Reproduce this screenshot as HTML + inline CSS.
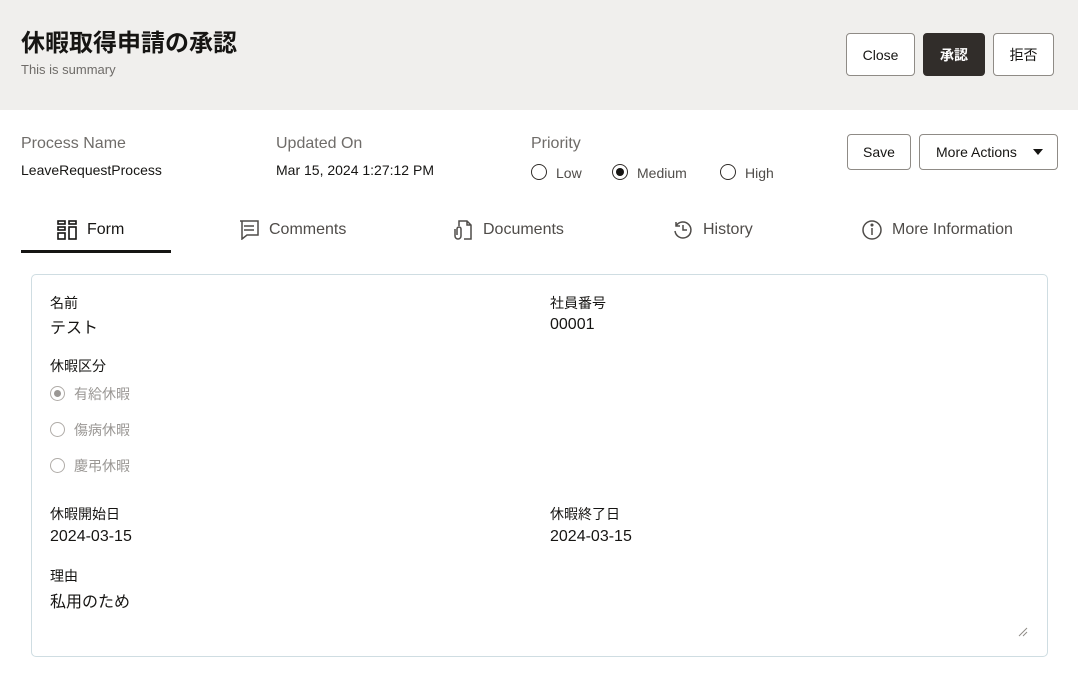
<!DOCTYPE html>
<html><head><meta charset="utf-8"><style>
*{box-sizing:border-box;margin:0;padding:0}
body{width:1078px;height:676px;overflow:hidden;background:#fff;font-family:"Liberation Sans","Noto Sans CJK JP",sans-serif;color:#161513;position:relative}
.hdr{position:absolute;left:0;top:0;width:1078px;height:110px;background:#f0efed}
.a{position:absolute;white-space:nowrap}
.btn{position:absolute;border:1px solid #8f8b86;border-radius:4px;background:#fff;font-size:14px;display:flex;align-items:center;justify-content:center;color:#161513}
.lbl{color:#6f6c69;font-size:16px}
.radio{position:absolute;width:16px;height:16px;border:1.3px solid #312d2a;border-radius:50%}
.radio.on::after{content:"";position:absolute;left:3px;top:3px;width:8px;height:8px;border-radius:50%;background:#161513}
.tab{position:absolute;top:220px;font-size:16px;color:#4f4c49;display:flex;align-items:center;gap:10px}
.card{position:absolute;left:31px;top:274px;width:1017px;height:383px;border:1px solid #cfdde2;border-radius:5px}
.fl{font-size:14px;color:#161513}
.fv{font-size:16px;color:#161513}
.gr{position:absolute;width:15px;height:15px;border:1px solid #b0aca8;border-radius:50%}
.gt{font-size:14px;color:#9a9794}
</style></head><body>
<div class="hdr"></div>
<div class="a" style="left:21px;top:23px;font-size:24px;font-weight:bold">休暇取得申請の承認</div>
<div class="a" style="left:21px;top:62px;font-size:13px;color:#6f6c69">This is summary</div>
<div class="btn" style="left:846px;top:33px;width:69px;height:43px">Close</div>
<div class="btn" style="left:923px;top:33px;width:62px;height:43px;background:#312d2a;border-color:#312d2a;color:#fff;font-weight:bold">承認</div>
<div class="btn" style="left:993px;top:33px;width:61px;height:43px">拒否</div>

<div class="a lbl" style="left:21px;top:135px">Process Name</div>
<div class="a" style="left:21px;top:162px;font-size:14px">LeaveRequestProcess</div>
<div class="a lbl" style="left:276px;top:135px">Updated On</div>
<div class="a" style="left:276px;top:162px;font-size:14px">Mar 15, 2024 1:27:12 PM</div>
<div class="a lbl" style="left:531px;top:135px">Priority</div>
<div class="radio" style="left:531px;top:164px"></div><div class="a" style="left:556px;top:165px;font-size:14px;color:#4f4c49">Low</div>
<div class="radio on" style="left:612px;top:164px"></div><div class="a" style="left:637px;top:165px;font-size:14px;color:#4f4c49">Medium</div>
<div class="radio" style="left:720px;top:164px"></div><div class="a" style="left:745px;top:165px;font-size:14px;color:#4f4c49">High</div>
<div class="btn" style="left:847px;top:134px;width:64px;height:36px">Save</div>
<div class="btn" style="left:919px;top:134px;width:139px;height:36px;justify-content:flex-start;padding-left:16px">More Actions<span style="position:absolute;right:14px;top:14px;border-left:5px solid transparent;border-right:5px solid transparent;border-top:6px solid #161513"></span></div>

<div class="tab" style="left:57px;color:#161513"><svg width="20" height="20" viewBox="0 0 20 20" fill="none" stroke="#161513" stroke-width="1.6"><rect x="1" y="1" width="7" height="3"/><rect x="1" y="7" width="7" height="3"/><rect x="1" y="13" width="7" height="6"/><rect x="12" y="1" width="7" height="3"/><rect x="12" y="7" width="7" height="12"/></svg>Form</div>
<div class="a" style="left:21px;top:250px;width:150px;height:3px;background:#161513"></div>
<div class="tab" style="left:239px"><svg width="20" height="20" viewBox="0 0 20 20" fill="none" stroke="#4f4c49" stroke-width="1.5"><path d="M1 1h18v14H8l-5 4V1z M5 6h10 M5 10h10"/></svg>Comments</div>
<div class="tab" style="left:453px"><svg width="20" height="20" viewBox="0 0 20 20" fill="none" stroke="#4f4c49" stroke-width="1.5"><path d="M6 6V1h8l4 4v14h-7 M14 1v4h4"/><path d="M2 9v7a3 3 0 0 0 6 0V9a2 2 0 0 0-4 0v6"/></svg>Documents</div>
<div class="tab" style="left:673px"><svg width="20" height="20" viewBox="0 0 20 20" fill="none" stroke="#4f4c49" stroke-width="1.5"><path d="M3 6a8 8 0 1 1-1 5 M3 2v4h4 M10 5v5h4"/></svg>History</div>
<div class="tab" style="left:862px"><svg width="20" height="20" viewBox="0 0 20 20" fill="none" stroke="#4f4c49" stroke-width="1.5"><circle cx="10" cy="10" r="9"/><path d="M10 8v7"/><circle cx="10" cy="5" r=".8" fill="#4f4c49"/></svg>More Information</div>

<div class="card"></div>
<div class="a fl" style="left:50px;top:293px">名前</div>
<div class="a fv" style="left:50px;top:314px">テスト</div>
<div class="a fl" style="left:550px;top:293px">社員番号</div>
<div class="a fv" style="left:550px;top:316px">00001</div>
<div class="a fl" style="left:50px;top:356px">休暇区分</div>
<div class="gr" style="left:50px;top:386px"><div style="position:absolute;left:3px;top:3px;width:7px;height:7px;border-radius:50%;background:#9a9794"></div></div><div class="a gt" style="left:74px;top:384px">有給休暇</div>
<div class="gr" style="left:50px;top:422px"></div><div class="a gt" style="left:74px;top:420px">傷病休暇</div>
<div class="gr" style="left:50px;top:458px"></div><div class="a gt" style="left:74px;top:456px">慶弔休暇</div>
<div class="a fl" style="left:50px;top:504px">休暇開始日</div>
<div class="a fv" style="left:50px;top:528px">2024-03-15</div>
<div class="a fl" style="left:550px;top:504px">休暇終了日</div>
<div class="a fv" style="left:550px;top:528px">2024-03-15</div>
<div class="a fl" style="left:50px;top:566px">理由</div>
<div class="a fv" style="left:50px;top:588px">私用のため</div>
<svg class="a" style="left:1018px;top:627px" width="10" height="10"><path d="M1 9L9 1M5 9L9 5" stroke="#8f8b86"/></svg>
</body></html>
